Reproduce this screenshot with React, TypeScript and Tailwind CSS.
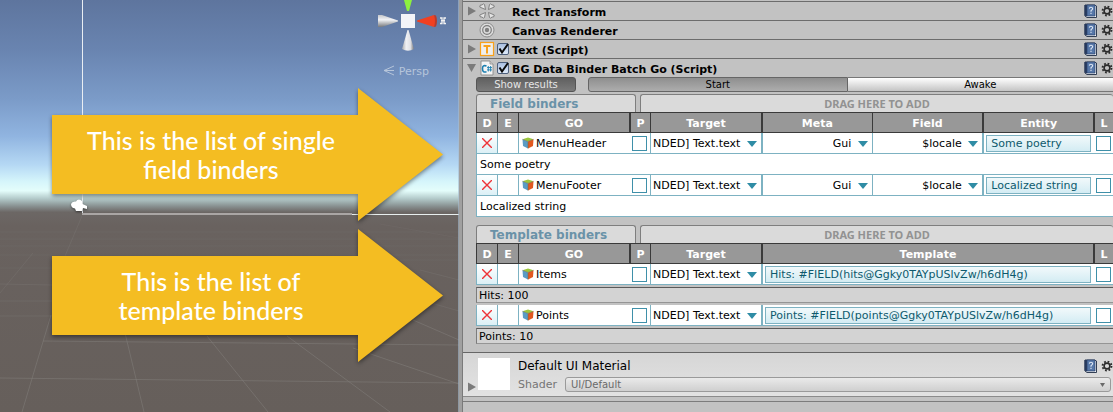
import type { ReactNode } from "react";

type Binder = { name: string; result: string; value: string };

const fieldBinders: Binder[] = [
  { name: "MenuHeader", result: "Some poetry", value: "Some poetry" },
  { name: "MenuFooter", result: "Localized string", value: "Localized string" },
];

const templateBinders: Binder[] = [
  { name: "Items", result: "Hits: 100", value: "Hits: #FIELD(hits@Ggky0TAYpUSlvZw/h6dH4g)" },
  { name: "Points", result: "Points: 10", value: "Points: #FIELD(points@Ggky0TAYpUSlvZw/h6dH4g)" },
];

/* ---------- icons ---------- */

function Foldout({ open = false }: { open?: boolean }) {
  return (
    <svg viewBox="0 0 9 10" className="h-[10px] w-[9px] shrink-0" aria-hidden="true">
      <path d={open ? "M0 1h9L4.5 9z" : "M1 0.5v9L9 5z"} fill="#7b7b7b" />
    </svg>
  );
}

function RectIcon() {
  return (
    <svg viewBox="0 0 16 16" className="size-4" fill="#e4e4e4" stroke="#777" strokeWidth="0.9" aria-hidden="true">
      <path d="M6.500 6.500 0.700 4Q1 1 3 2Q4.500 0 5.500 1.500z" />
      <path d="M9.500 6.500 10.500 1.500Q11.500 0 13 2Q15 1 15.300 4z" />
      <path d="M6.500 9.500 5.500 14.500Q4.500 16 3 14Q1 15 0.700 12z" />
      <path d="M9.500 9.500 15.300 12Q15 15 13 14Q11.500 16 10.500 14.500z" />
    </svg>
  );
}

function CanvasIcon() {
  return (
    <svg viewBox="0 0 16 16" className="size-4" fill="none" aria-hidden="true">
      <circle cx="8" cy="8" r="7" stroke="#8c8c8c" fill="#dcdcdc" />
      <circle cx="8" cy="8" r="4.300" stroke="#7c7c7c" strokeWidth="1.200" />
      <circle cx="8" cy="8" r="2.200" fill="#808080" />
    </svg>
  );
}

function TextIcon() {
  return (
    <svg viewBox="0 0 16 16" className="size-4" aria-hidden="true">
      <rect x="1.500" y="1.500" width="13" height="13" fill="#eee" stroke="#f9a11b" strokeWidth="1.200" />
      <path d="M4.500 5h7M8 5v7.500" stroke="#f9a11b" strokeWidth="2" fill="none" />
    </svg>
  );
}

function ScriptIcon() {
  return (
    <svg viewBox="0 0 16 16" className="size-4" aria-hidden="true">
      <path d="M2 1h9l3 3v11H2z" fill="#f4f4f4" stroke="#8a8a8a" strokeWidth="0.900" />
      <path d="M11 1v3h3" fill="#d5d5d5" stroke="#8a8a8a" strokeWidth="0.800" />
      <path d="M7.500 6Q3.500 4.500 3.500 8.700T7.500 11.800" fill="none" stroke="#1c7fb0" strokeWidth="1.600" />
      <path d="M9.300 6v5.500M11.600 6v5.500M8 7.600h5M8 9.900h5" stroke="#1c7fb0" strokeWidth="0.900" />
    </svg>
  );
}

function HelpIcon() {
  return (
    <svg viewBox="0 0 13 14" className="h-[14px] w-[13px]" aria-hidden="true">
      <path d="M1 1h9.500l2 1v11.500H3L1 12z" fill="#f2f4f8" stroke="#1e2b44" strokeWidth="0.900" />
      <path d="M0.500 1H3v11.500l-2.500-1z" fill="#27395c" />
      <path d="M3 1h8v11H3z" fill="#5778a9" stroke="#2c446d" strokeWidth="0.700" />
      <path d="M5.300 4.700Q5.500 3.300 7 3.300t1.700 1.300Q8.700 5.700 7 6.700v1M7 8.700v1.200" fill="none" stroke="#dfe8f5" strokeWidth="1.100" />
    </svg>
  );
}

function GearIcon() {
  return (
    <svg viewBox="0 0 12 12" className="size-3" aria-hidden="true">
      <circle cx="6" cy="6" r="4.500" fill="none" stroke="#2b2b2b" strokeWidth="1.800" strokeDasharray="1.770" />
      <circle cx="6" cy="6" r="2.900" fill="none" stroke="#2b2b2b" strokeWidth="1.600" />
    </svg>
  );
}

function CubeIcon() {
  return (
    <svg viewBox="0 0 12 12" className="size-3 shrink-0" aria-hidden="true">
      <path d="M6 0.500 11.500 2.300 6 4.500.500 2.300z" fill="#9cc63c" />
      <path d="M.500 2.300 6 4.500v7L1 9z" fill="#5a9bc4" />
      <path d="M11.500 2.300 6 4.500v7L11 9z" fill="#e2581f" />
      <path d="M.500 2.300 6 4.500l5.500-2.200M6 4.500v7" fill="none" stroke="#6b6a4a" strokeWidth="0.500" />
    </svg>
  );
}

function DownIcon() {
  return (
    <svg viewBox="0 0 10 6" className="pointer-events-none absolute top-2 right-1 h-[6px] w-[10px]" aria-hidden="true">
      <path d="M0 0h10L5 6z" fill="#2f8ca5" />
    </svg>
  );
}

/* ---------- scene view ---------- */

function SceneBackdrop() {
  return (
    <svg viewBox="0 0 459 412" preserveAspectRatio="none" className="absolute inset-0 size-full" aria-hidden="true">
      <defs>
        <linearGradient id="sky" x1="0" y1="0" x2="0" y2="1">
          <stop offset="0" stopColor="#5e759e" />
          <stop offset="0.120" stopColor="#6984b0" />
          <stop offset="0.240" stopColor="#7b9bc8" />
          <stop offset="0.330" stopColor="#90b4e0" />
          <stop offset="0.400" stopColor="#b5d8f4" />
          <stop offset="0.440" stopColor="#d5f5fb" />
          <stop offset="0.463" stopColor="#e4fdfb" />
          <stop offset="0.482" stopColor="#b3caca" />
          <stop offset="0.500" stopColor="#899292" />
          <stop offset="0.515" stopColor="#6c6765" />
          <stop offset="0.550" stopColor="#69625f" />
          <stop offset="1" stopColor="#665f5b" />
        </linearGradient>
      </defs>
      <rect width="459" height="412" fill="url(#sky)" />
      <g stroke="#817d7a" strokeOpacity="0.550" fill="none">
        <path d="M51 315 22 412M125 333l19 79M207 336l61 76M287 336l103 76M353 348l106 36M413 320l46 20" />
        <path d="M43 341 459 345M0 378l459 5" />
        <path d="M82 216 65 256M33 253 0 293M0 284l52 1M0 316h52M0 301h52M420 270l39 10M410 297l49 14" strokeOpacity="0.300" />
        <path d="M0 232h459M0 239h459M0 246h459M0 255h459M380 224l79 14M400 260h59M0 268h52" strokeOpacity="0.160" />
      </g>
      <path d="M82.500 0v213" stroke="#e9eef3" fill="none" />
      <path d="M82 214h270" stroke="#aaa6a5" strokeWidth="2" />
      <path d="M352 214.500h107" stroke="#e8eeee" />
      <path d="M458.500 0v412" stroke="#a7bdd0" strokeOpacity="0.600" />
    </svg>
  );
}

function Gizmo() {
  return (
    <svg viewBox="0 0 80 84" className="absolute top-0 right-3 h-[84px] w-20" aria-hidden="true">
      <defs>
        <linearGradient id="cone" x1="0" y1="0" x2="1" y2="0">
          <stop offset="0" stopColor="#a7a9ad" />
          <stop offset="0.350" stopColor="#f0f1f4" />
          <stop offset="0.700" stopColor="#e0e1e5" />
          <stop offset="1" stopColor="#77797d" />
        </linearGradient>
        <linearGradient id="coneSide" x1="0" y1="0" x2="0" y2="1">
          <stop offset="0" stopColor="#c4c6ca" />
          <stop offset="0.400" stopColor="#f2f3f6" />
          <stop offset="1" stopColor="#77797d" />
        </linearGradient>
      </defs>
      <path d="M37 0h8l-3 11h-2z" fill="#8df03f" />
      <path d="M11 15h4l16 5.500v1L15 27h-4z" fill="url(#coneSide)" />
      <rect x="34" y="14" width="14" height="14" fill="#f3f4f8" />
      <path d="M50 20.500 67 15q3 6 0 12L50 21.500z" fill="#f04022" />
      <path d="M69 15.500q2 5.500 0 11l-2 .500q2-6 0-12z" fill="#b83a2c" />
      <path d="M40.500 30h1L47 49q-6 3.500-12 0z" fill="url(#cone)" />
      <path d="M73 18h2v5.500h-2M79 18h-2v5.500h2M74 20.700h4" stroke="#f2f2f2" strokeWidth="1.300" fill="none" />
      <path d="M27 66l-10 4.500 10 4.500M17 70.500h10" stroke="#b6c5da" fill="none" />
    </svg>
  );
}

function Callout({ children }: { children: ReactNode }) {
  return (
    <div className="relative h-[133px] w-[391px]">
      <svg viewBox="0 0 391 133" className="absolute inset-0 size-full overflow-visible drop-shadow-[0_2px_2px_rgba(0,0,0,0.45)]" aria-hidden="true">
        <path d="M0 27h306V0l85 66.500L306 133v-27H0z" fill="#f4bd22" />
      </svg>
      <p className="relative flex h-full w-[318px] items-center justify-center text-center font-['Lato',sans-serif] text-[25px] leading-[29px] font-medium text-white">
        {children}
      </p>
    </div>
  );
}

function SceneView() {
  return (
    <section aria-label="Scene" className="relative w-[459px] shrink-0 overflow-hidden bg-[#665f5b]">
      <SceneBackdrop />
      <Gizmo />
      <span className="absolute top-[65px] right-[30px] text-[11px] leading-[14px] text-[#b6c5da]">Persp</span>
      <svg viewBox="0 0 18 14" className="absolute top-[199px] left-[70px] h-[14px] w-[18px] drop-shadow-[0_1px_1px_rgba(0,0,0,0.5)]" aria-hidden="true">
        <path d="M1 5q1-3 5-2.500Q8-1 12 2l.500 3 4.500 2v3l-4-1-1 3H6L5 9.500Q1 9 1 5z" fill="#fff" />
      </svg>
      <div className="relative flex flex-col gap-2 pt-[88px] pl-[52px]">
        <Callout>
          This is the list of single
          <br />
          field binders
        </Callout>
        <Callout>
          This is the list of
          <br />
          template binders
        </Callout>
      </div>
    </section>
  );
}

/* ---------- inspector ---------- */

function HeaderTools() {
  return (
    <div className="ml-auto flex items-center gap-1">
      <button type="button" aria-label="Help">
        <HelpIcon />
      </button>
      <button type="button" aria-label="Settings">
        <GearIcon />
      </button>
    </div>
  );
}

function ComponentHeader({ title, icon, fold, toggle }: { title: string; icon: ReactNode; fold?: "open" | "closed"; toggle?: boolean }) {
  return (
    <header className="flex h-[19px] items-center gap-[3px] border-t border-[#6c6c6c] pl-1">
      <span className="w-[9px]">{fold && <Foldout open={fold === "open"} />}</span>
      <span className="w-[15px]">{icon}</span>
      <span className="relative size-3">
        {toggle && (
          <>
            <input
              type="checkbox"
              defaultChecked
              aria-label={title}
              className="peer block size-3 appearance-none rounded-[2px] border border-[#4d5f7c] bg-linear-to-b from-[#a9bfe0] to-[#e0ebfa]"
            />
            <svg viewBox="0 0 12 12" className="pointer-events-none absolute inset-0 hidden size-3 overflow-visible peer-checked:block" aria-hidden="true">
              <path d="M2.500 5.500 5 9.500 11 1" fill="none" stroke="#0b0b0b" strokeWidth="2" />
            </svg>
          </>
        )}
      </span>
      <h2 className="pt-[3px] text-[11px] leading-[14px] font-bold">{title}</h2>
      <HeaderTools />
    </header>
  );
}

function SectionTabs({ title }: { title: string }) {
  return (
    <div className="flex h-[18px] gap-1">
      <h3 className="w-40 rounded-t-[3px] border border-b-0 border-[#7e7e7e] bg-[#dadada] pl-[13px] text-[12px] leading-[18px] font-bold text-[#6a92a8]">
        {title}
      </h3>
      <div className="flex-1 rounded-t-[3px] border border-r-0 border-b-0 border-[#7e7e7e] bg-[#dadada] text-center font-['Noto_Sans','Open_Sans',sans-serif] text-[11px] leading-[17px] font-bold text-[#929292]">
        DRAG HERE TO ADD
      </div>
    </div>
  );
}

function Picker({ label, value }: { label: string; value: string }) {
  return (
    <div className="relative flex h-5 justify-end overflow-hidden">
      <select aria-label={label} className="h-5 shrink-0 appearance-none bg-transparent pt-[2px] pr-5">
        <option>{value}</option>
      </select>
      <DownIcon />
    </div>
  );
}

function CellCheck({ label }: { label: string }) {
  return <input type="checkbox" aria-label={label} className="mx-auto block size-[15px] appearance-none border border-[#3f90a9] bg-white checked:bg-[#3f90a9]" />;
}

function ValueButton({ children }: { children: ReactNode }) {
  return (
    <button type="button" className="block h-[17px] w-full truncate border border-[#7db2c2] bg-linear-to-b from-[#f2f9fb] to-[#d3ecf3] px-1 pt-px text-left leading-[14px] text-[#0d5a6d]">
      {children}
    </button>
  );
}

function BinderTable({ columns, rows, kind }: { columns: string[]; rows: Binder[]; kind: "field" | "template" }) {
  const isField = kind === "field";
  return (
    <table className="w-full table-fixed border-separate border-spacing-0 text-[11px] leading-[14px] [&_td]:p-0">
      <colgroup>
        <col className="w-[21px]" />
        <col className="w-[21px]" />
        <col className="w-[111px]" />
        <col className="w-[21px]" />
        <col className="w-[111px]" />
        {isField && <col />}
        {isField && <col />}
        <col />
        <col className="w-5" />
      </colgroup>
      <thead>
        <tr className="h-[21px] bg-[#989898] text-white">
          {columns.map((name) => (
            <th
              key={name}
              scope="col"
              className={
                ["Meta", "Entity", "Template", "P", "L"].includes(name)
                  ? "border-y border-l-2 border-[#3a3a3a] p-0 pt-[2px] font-bold"
                  : "border-y border-l border-[#3a3a3a] p-0 pt-[2px] font-bold"
              }
            >
              {name}
            </th>
          ))}
        </tr>
      </thead>
      {rows.map((row) => (
        <tbody key={row.name}>
          <tr className="h-[21px] bg-white [&>td]:border-b [&>td]:border-[#7db2c2]">
            <td className="border-l bg-linear-to-b from-white to-[#dcf0f6]">
              <button type="button" aria-label={"Delete " + row.name} className="flex h-5 w-full items-center justify-center">
                <svg viewBox="0 0 10 10" className="size-[10px]" aria-hidden="true">
                  <path d="M0 0l10 10M10 0 0 10" stroke="#ee3338" strokeWidth="1.400" />
                </svg>
              </button>
            </td>
            <td className="border-l" />
            <td className="border-l">
              <div className="flex items-center gap-[2px] pl-[3px]">
                <CubeIcon />
                <span className="pt-[2px]">{row.name}</span>
              </div>
            </td>
            <td>
              <CellCheck label={"P " + row.name} />
            </td>
            <td className="border-l">
              <Picker label="Target" value="NDED] Text.text" />
            </td>
            {isField && (
              <td className="border-l-2">
                <Picker label="Meta" value="Gui" />
              </td>
            )}
            {isField && (
              <td className="border-l">
                <Picker label="Field" value="$locale" />
              </td>
            )}
            <td className="border-l-2">
              <div className="px-[2px]">
                <ValueButton>{row.value}</ValueButton>
              </div>
            </td>
            <td>
              <CellCheck label={"L " + row.name} />
            </td>
          </tr>
          {isField ? (
            <tr className="h-[21px] bg-white">
              <td colSpan={9} className="border-b border-l border-[#7db2c2]">
                <div className="pt-[2px] pl-[3px]">{row.result}</div>
              </td>
            </tr>
          ) : (
            <tr className="h-5">
              <td colSpan={7}>
                <div className="h-4 border border-r-0 border-t-[#5a5a5a] border-b-[#959595] border-l-[#7c7c7c] bg-[#d3d3d3] pt-px pl-[2px]">
                  {row.result}
                </div>
              </td>
            </tr>
          )}
        </tbody>
      ))}
    </table>
  );
}

function MaterialPanel() {
  return (
    <section className="flex h-[45px] items-start border-t border-b border-t-[#666] border-b-[#8b8b8b] bg-linear-to-b from-[#d6d6d6] to-[#e2e2e2] pt-[5px] pl-1">
      <span className="pt-[24px]">
        <Foldout />
      </span>
      <div className="ml-[2px] size-8 shrink-0 bg-white" />
      <div className="ml-2 flex-1">
        <div className="flex h-[15px] items-center">
          <h2 className="text-[12px]">Default UI Material</h2>
          <HeaderTools />
        </div>
        <label className="mt-1 mr-[2px] flex items-center gap-2 text-[11px] leading-[15px] text-[#757575]">
          Shader
          <span className="relative flex-1">
            <select className="block h-[15px] w-full appearance-none rounded-[3px] border border-[#9a9a9a] bg-linear-to-b from-[#eaeaea] to-[#cfcfcf] px-[5px] text-[10px] leading-[13px] text-[#6a6a6a]">
              <option>UI/Default</option>
            </select>
            <svg viewBox="0 0 5 4" className="pointer-events-none absolute top-[6px] right-[6px] h-1 w-[5px]" aria-hidden="true">
              <path d="M0 0h5L2.500 4z" fill="#6a6a6a" />
            </svg>
          </span>
        </label>
      </div>
    </section>
  );
}

function Inspector() {
  return (
    <section aria-label="Inspector" className="min-w-0 flex-1 bg-[#c2c2c2] pt-px">
      <ComponentHeader title="Rect Transform" icon={<RectIcon />} fold="closed" />
      <ComponentHeader title="Canvas Renderer" icon={<CanvasIcon />} />
      <ComponentHeader title="Text (Script)" icon={<TextIcon />} fold="closed" toggle />
      <ComponentHeader title="BG Data Binder Batch Go (Script)" icon={<ScriptIcon />} fold="open" toggle />
      <div className="pb-[6px] pl-[13px]">
        <div className="flex h-[15px] gap-3 text-[10px] leading-[14px]">
          <button type="button" className="w-[100px] rounded-[3px] border border-[#555] bg-linear-to-b from-[#606060] to-[#7b7b7b] text-[#e6e6e6]">
            Show results
          </button>
          <div className="flex flex-1">
            <button type="button" className="flex-[33] rounded-l-[3px] border border-[#666] bg-linear-to-b from-[#8f8f8f] to-[#adadad] text-black">
              Start
            </button>
            <button type="button" className="flex-[34] border-y border-t-[#777] border-b-[#777] bg-linear-to-b from-white to-[#c4c4c4] text-black">
              Awake
            </button>
          </div>
        </div>
        <div className="mt-[2px]">
          <SectionTabs title="Field binders" />
          <BinderTable kind="field" columns={["D", "E", "GO", "P", "Target", "Meta", "Field", "Entity", "L"]} rows={fieldBinders} />
        </div>
        <div className="mt-2">
          <SectionTabs title="Template binders" />
          <BinderTable kind="template" columns={["D", "E", "GO", "P", "Target", "Template", "L"]} rows={templateBinders} />
        </div>
      </div>
      <MaterialPanel />
      <div className="mt-1 border-t border-[#7c7c7c]" />
    </section>
  );
}

export default function App() {
  return (
    <main className="flex min-h-screen overflow-hidden font-['DejaVu_Sans',sans-serif] text-black">
      <SceneView />
      <div className="w-1 shrink-0 border-r border-[#7a7a7a] bg-[#a0a0a0]" />
      <Inspector />
    </main>
  );
}
